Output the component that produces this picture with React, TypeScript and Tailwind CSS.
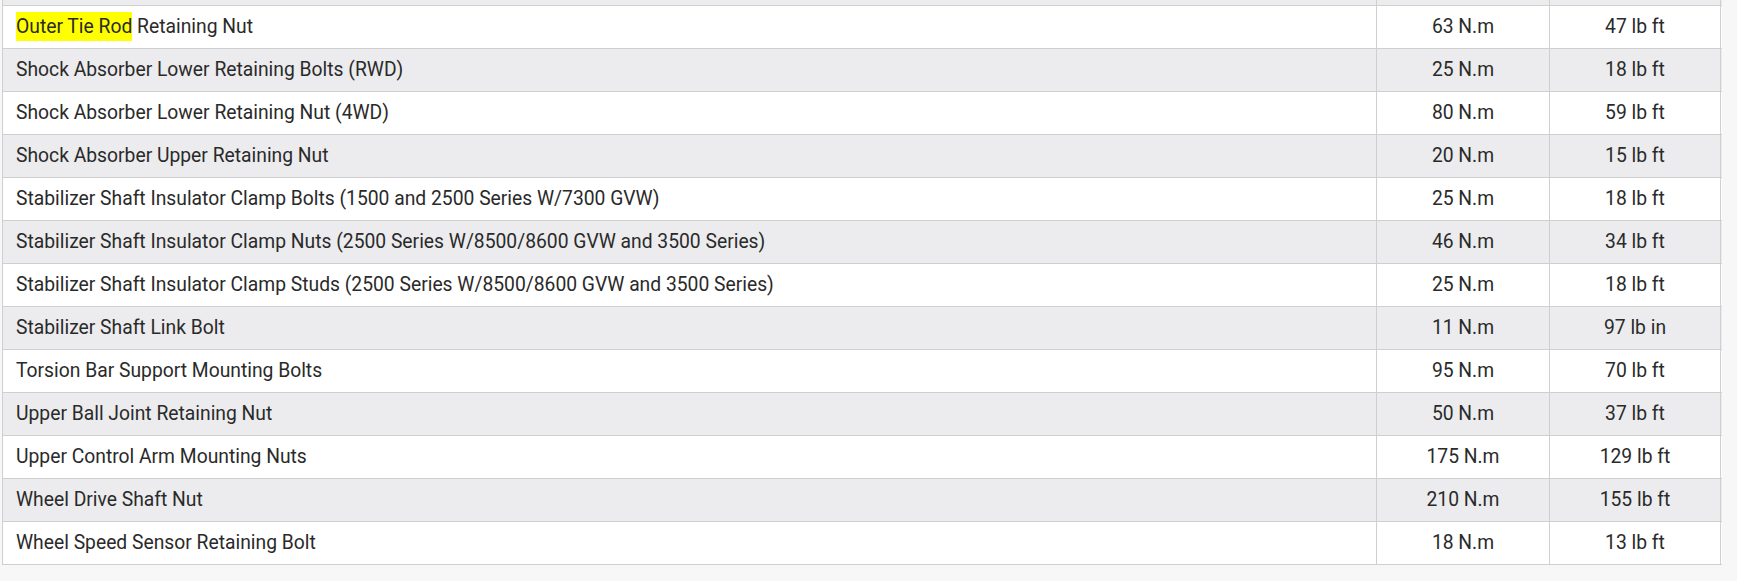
const rows: [string, string, string][] = [
  ['Outer Tie Rod Retaining Nut', '63 N.m', '47 lb ft'],
  ['Shock Absorber Lower Retaining Bolts (RWD)', '25 N.m', '18 lb ft'],
  ['Shock Absorber Lower Retaining Nut (4WD)', '80 N.m', '59 lb ft'],
  ['Shock Absorber Upper Retaining Nut', '20 N.m', '15 lb ft'],
  ['Stabilizer Shaft Insulator Clamp Bolts (1500 and 2500 Series W/7300 GVW)', '25 N.m', '18 lb ft'],
  ['Stabilizer Shaft Insulator Clamp Nuts (2500 Series W/8500/8600 GVW and 3500 Series)', '46 N.m', '34 lb ft'],
  ['Stabilizer Shaft Insulator Clamp Studs (2500 Series W/8500/8600 GVW and 3500 Series)', '25 N.m', '18 lb ft'],
  ['Stabilizer Shaft Link Bolt', '11 N.m', '97 lb in'],
  ['Torsion Bar Support Mounting Bolts', '95 N.m', '70 lb ft'],
  ['Upper Ball Joint Retaining Nut', '50 N.m', '37 lb ft'],
  ['Upper Control Arm Mounting Nuts', '175 N.m', '129 lb ft'],
  ['Wheel Drive Shaft Nut', '210 N.m', '155 lb ft'],
  ['Wheel Speed Sensor Retaining Bolt', '18 N.m', '13 lb ft'],
];

const grid = 'grid grid-cols-[1374px_173px_171px] border-b border-[#cfcfcf]';
const cell = 'border-r border-[#cfcfcf]';

export default function App() {
  return (
    <div className="min-h-screen bg-[#f7f7f7] pl-[2px] font-['Roboto',sans-serif] text-[19.3px] text-[#2a2a2a]">
      <div className="w-[1720px] border-l border-[#cfcfcf]">
        {/* tail of the previous row */}
        <div className={`${grid} h-[6px] bg-[#ececee]`}>
          <div className={cell} />
          <div className={cell} />
          <div className={cell} />
        </div>

        {rows.map(([part, nm, lb], i) => (
          <div key={part} className={`${grid} h-[43px] ${i % 2 === 0 ? 'bg-white' : 'bg-[#ececee]'}`}>
            <div className={`${cell} flex items-center pl-[13px]`}>
              {i === 0 ? (
                <span>
                  <span className="inline-block h-[29px] bg-[#ffff00] leading-[29px]">Outer Tie Rod</span> Retaining Nut
                </span>
              ) : (
                part
              )}
            </div>
            <div className={`${cell} flex items-center justify-center`}>{nm}</div>
            <div className={`${cell} flex items-center justify-center`}>{lb}</div>
          </div>
        ))}
      </div>
    </div>
  );
}
